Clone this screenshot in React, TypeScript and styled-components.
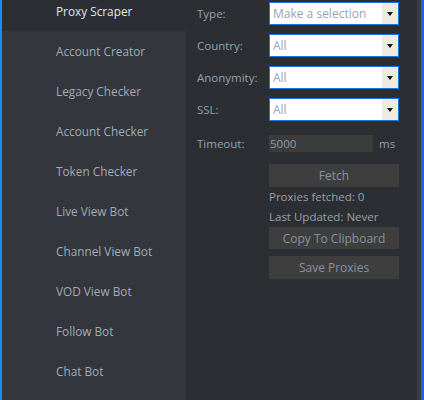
import * as React from "react"
import styled, { createGlobalStyle } from "styled-components"

const GlobalStyle = createGlobalStyle`
  html, body {
    margin: 0;
    padding: 0;
    background: #2b2e33;
  }
  body {
    font-family: "Open Sans", "Noto Sans", sans-serif;
    font-size: 11.5px;
  }
`

const Window = styled.div`
  display: flex;
  flex-direction: row;
  width: 424px;
  height: 400px;
  overflow: hidden;
`

const Edge = styled.div<{ color: string; width: number }>`
  width: ${props => props.width}px;
  flex: none;
  background: ${props => props.color};
`

const Sidebar = styled.nav`
  width: 184px;
  flex: none;
  background: #33363c;
  display: flex;
  flex-direction: column;
  margin-top: -9px;
`

const NavItem = styled.a<{ active?: boolean }>`
  height: 40px;
  flex: none;
  display: flex;
  align-items: center;
  padding-left: 54px;
  font-size: 11.8px;
  color: ${props => props.active ? "#e4e6ea" : "#a3abb8"};
  background: ${props => props.active ? "#2b2e33" : "transparent"};
  cursor: pointer;
`

const Main = styled.main`
  flex: 1;
  background: #2b2e33;
  padding: 2px 0 0 11px;
  display: flex;
  flex-direction: column;
`

const ScrollTrack = styled.div`
  width: 4px;
  flex: none;
  background: #393c41;
`

const FieldRow = styled.div<{ gap?: number }>`
  display: flex;
  flex-direction: row;
  align-items: center;
  margin-top: ${props => props.gap ?? 0}px;
`

const Label = styled.label`
  width: 72px;
  flex: none;
  color: #99a1ad;
`

const Select = styled.div`
  width: 128px;
  height: 21px;
  border: 1px solid #1c74e0;
  background: #ffffff;
  display: flex;
  flex-direction: row;
  align-items: stretch;
`

const SelectValue = styled.span`
  flex: 1;
  display: flex;
  align-items: center;
  padding-left: 3px;
  color: #9ba3b2;
  font-size: 12px;
`

const SelectArrow = styled.span`
  width: 16px;
  flex: none;
  background: #eeebe0;
  display: flex;
  align-items: center;
  justify-content: center;

  &::after {
    content: "";
    border-left: 3.5px solid transparent;
    border-right: 3.5px solid transparent;
    border-top: 4px solid #111;
  }
`

const TextInput = styled.div`
  width: 104px;
  height: 17px;
  background: #3c3c3c;
  color: #949ba6;
  display: flex;
  align-items: center;
  padding-left: 1px;
  box-sizing: border-box;
`

const Unit = styled.span`
  margin-left: 6px;
  color: #99a1ad;
`

const Actions = styled.div`
  margin-left: 72px;
  width: 130px;
  display: flex;
  flex-direction: column;
  margin-top: 12px;
`

const Button = styled.button<{ gap?: number; tall?: number }>`
  height: ${props => props.tall ?? 23}px;
  margin-top: ${props => props.gap ?? 0}px;
  border: none;
  background: #3e3e3e;
  color: #8892a0;
  font: inherit;
  font-size: 12px;
  padding: 0;
`

const Status = styled.div`
  height: 20px;
  line-height: 20px;
  color: #99a1ad;
`

const tools = [
  "Proxy Scraper",
  "Account Creator",
  "Legacy Checker",
  "Account Checker",
  "Token Checker",
  "Live View Bot",
  "Channel View Bot",
  "VOD View Bot",
  "Follow Bot",
  "Chat Bot",
]

const selects = [
  { label: "Type:", value: "Make a selection" },
  { label: "Country:", value: "All" },
  { label: "Anonymity:", value: "All" },
  { label: "SSL:", value: "All" },
]

export default function App() {
  const [active, setActive] = React.useState(0)

  return <Window>
    <GlobalStyle />
    <Edge color="#1a8cf5" width={2} />
    <Sidebar>
      {tools.map((tool, i) =>
        <NavItem key={tool} active={i === active} onClick={() => setActive(i)}>{tool}</NavItem>
      )}
    </Sidebar>
    <Main>
      {selects.map((s, i) =>
        <FieldRow key={s.label} gap={i === 0 ? 0 : 9}>
          <Label>{s.label}</Label>
          <Select>
            <SelectValue>{s.value}</SelectValue>
            <SelectArrow />
          </Select>
        </FieldRow>
      )}
      <FieldRow gap={14}>
        <Label>Timeout:</Label>
        <TextInput>5000</TextInput>
        <Unit>ms</Unit>
      </FieldRow>
      <Actions>
        <Button>Fetch</Button>
        <Status>Proxies fetched: 0</Status>
        <Status>Last Updated: Never</Status>
        <Button tall={22}>Copy To Clipboard</Button>
        <Button gap={7}>Save Proxies</Button>
      </Actions>
    </Main>
    <ScrollTrack />
    <Edge color="#1565de" width={3} />
  </Window>
}
